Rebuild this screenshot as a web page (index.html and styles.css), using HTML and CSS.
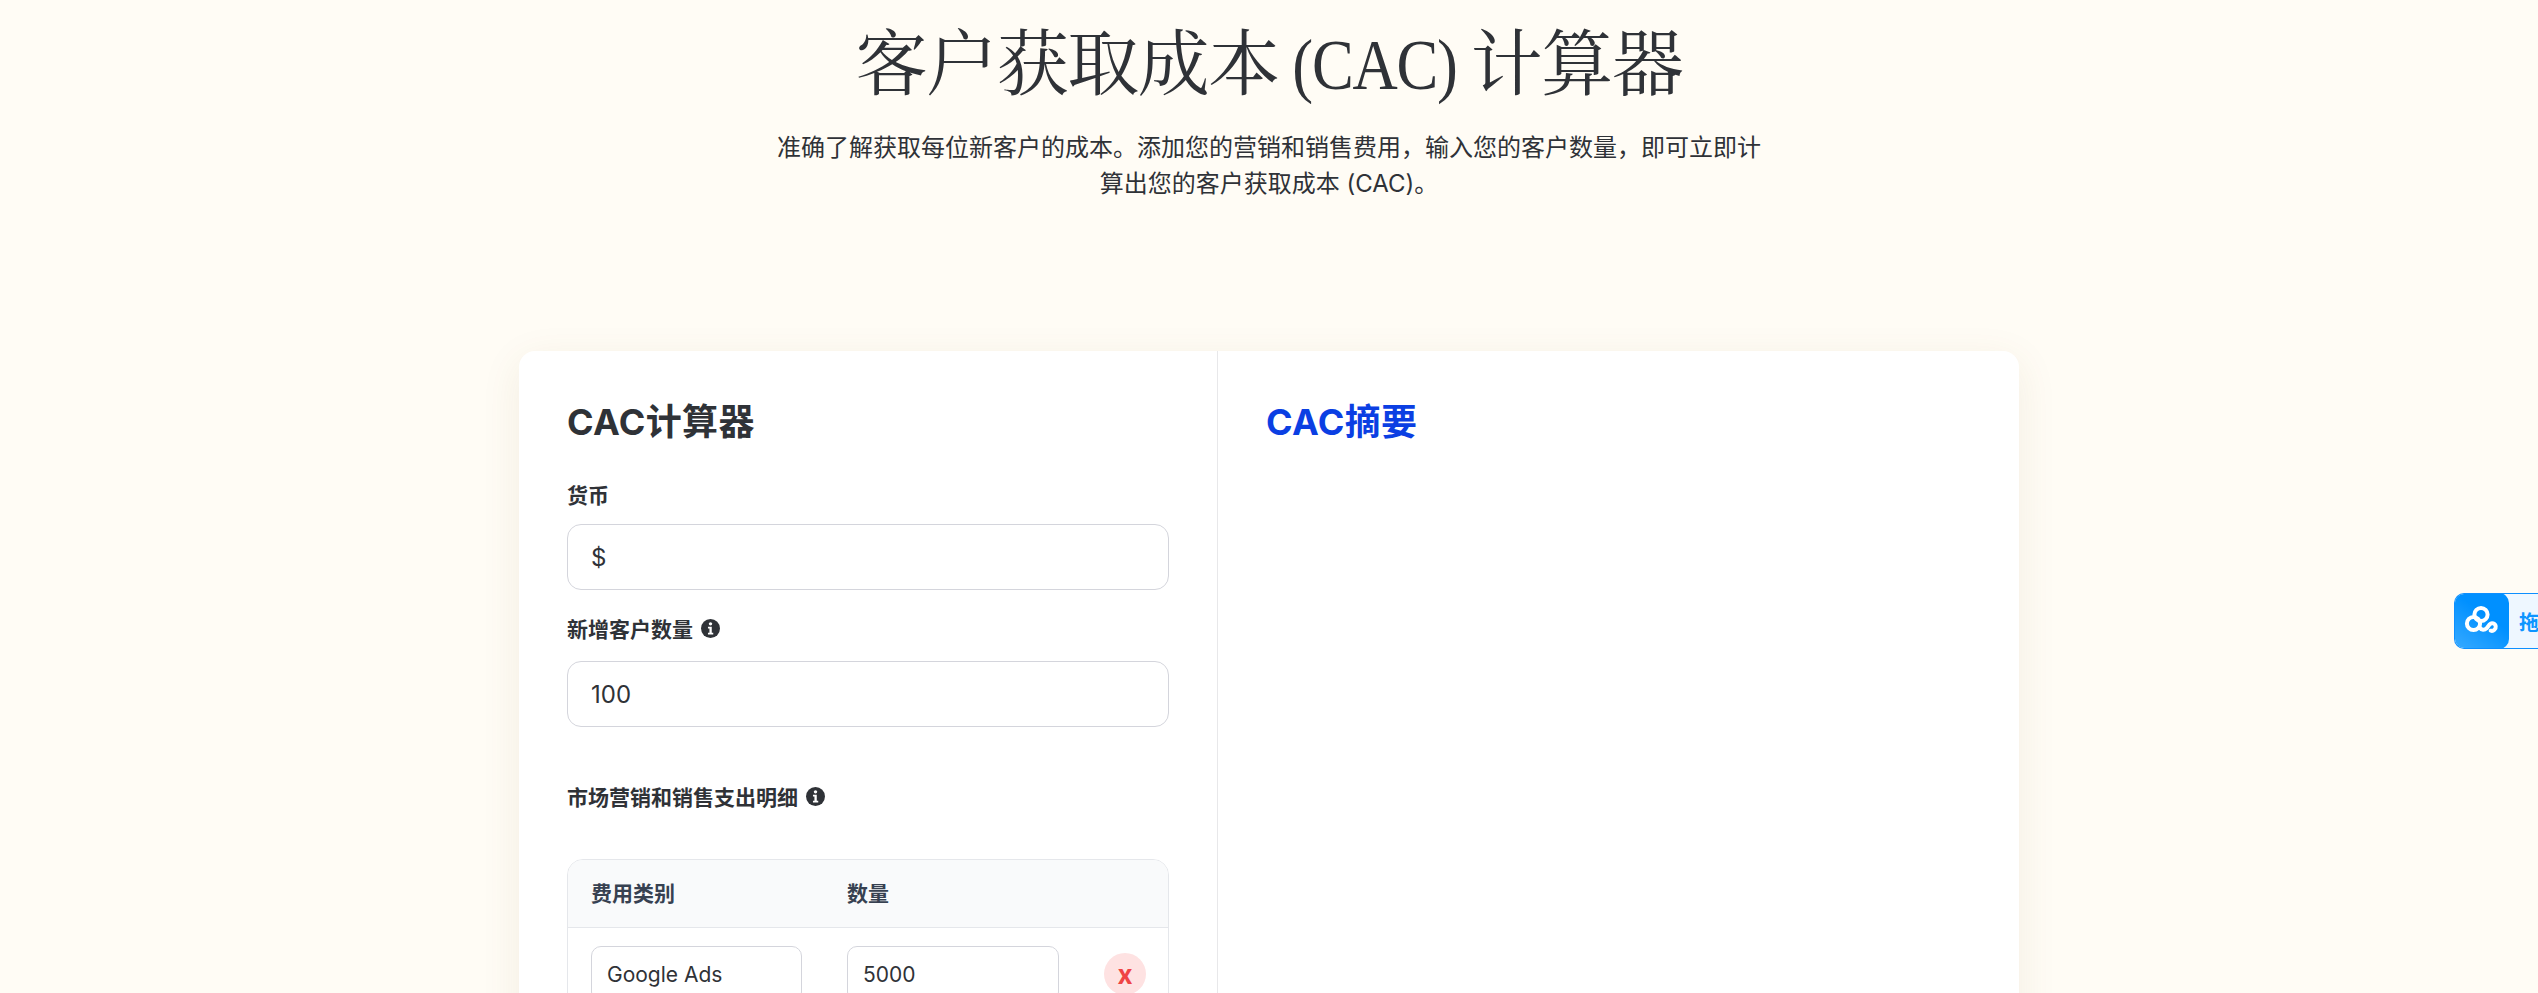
FILE: index.html
```html
<!DOCTYPE html>
<html lang="zh">
<head>
<meta charset="utf-8">
<title>客户获取成本 (CAC) 计算器</title>
<link rel="stylesheet" href="styles.css">
</head>
<body>
<header class="hero">
  <h1 class="hero-title">客户获取成本 <span class="latin">(CAC)</span> 计算器</h1>
  <p class="hero-sub">准确了解获取每位新客户的成本。添加您的营销和销售费用&#65292;输入您的客户数量&#65292;即可立即计算出您的客户获取成本 (CAC)。</p>
</header>
<main class="card">
  <section class="col-form">
    <h2 class="card-title">CAC计算器</h2>
    <label class="field-label first">货币</label>
    <input class="input" type="text" value="$">
    <label class="field-label with-icon">新增客户数量
      <svg class="info" viewBox="0 0 18 18"><circle cx="9" cy="9" r="9" fill="#2f3237"/><circle cx="9" cy="4.6" r="1.6" fill="#fff"/><path d="M6.6 7.4h3.6v5.6h1.4v1.6H6.6V13H8V9H6.6z" fill="#fff"/></svg>
    </label>
    <input class="input" type="text" value="100">
    <label class="field-label section">市场营销和销售支出明细
      <svg class="info" viewBox="0 0 18 18"><circle cx="9" cy="9" r="9" fill="#2f3237"/><circle cx="9" cy="4.6" r="1.6" fill="#fff"/><path d="M6.6 7.4h3.6v5.6h1.4v1.6H6.6V13H8V9H6.6z" fill="#fff"/></svg>
    </label>
    <div class="table">
      <div class="table-head">
        <span>费用类别</span>
        <span>数量</span>
      </div>
      <div class="table-row">
        <input class="cell-input" type="text" value="Google Ads">
        <input class="cell-input" type="text" value="5000">
        <button class="remove" type="button">x</button>
      </div>
    </div>
  </section>
  <section class="col-summary">
    <h2 class="card-title accent">CAC摘要</h2>
  </section>
</main>
<aside class="widget">
  <span class="widget-icon">
    <svg viewBox="0 0 55 56" width="55" height="56"><g fill="none" stroke="#fff" stroke-width="4" stroke-linecap="round"><circle cx="27" cy="21.5" r="6.6"/><circle cx="19.5" cy="30.5" r="6.6"/><path d="M25.5 34.5c2.2 3 5 2.8 7.2.8l3-4c2-2.2 5.6-.8 6 2 .4 2.8-2.2 5.2-5 4.4"/></g></svg>
  </span>
  <span class="widget-text">拖拽</span>
</aside>
</body>
</html>
```

FILE: styles.css
```css
* { box-sizing: border-box; }
html, body { height: 993px; overflow: hidden; }
body {
  margin: 0;
  background: #fffcf5;
  color: #2f3237;
  font-family: Inter, "Noto Sans CJK SC", sans-serif;
}
.hero {
  display: flex;
  flex-direction: column;
  align-items: center;
  padding-top: 22px;
}
.hero-title {
  margin: 0;
  font-family: "Liberation Serif", "Noto Serif CJK SC", "Noto Sans CJK SC", serif;
  font-weight: 400;
  font-size: 72px;
  line-height: 86px;
  letter-spacing: -0.02em;
  color: #2f3237;
}
.latin {
  display: inline-block;
  margin: 0 -15px;
  transform: scaleX(0.87);
}
.hero-sub {
  width: 1000px;
  margin: 22px 0 149px;
  font-size: 24px;
  line-height: 36px;
  text-align: center;
  color: #2f3237;
}
.card {
  display: grid;
  grid-template-columns: 699px 1fr;
  width: 1500px;
  min-height: 900px;
  margin: 0 auto;
  background: #fff;
  border-radius: 16px;
  box-shadow: 0 10px 40px rgba(120, 90, 30, 0.09);
}
.col-form {
  padding: 45px 48px 48px;
  border-right: 1px solid #e8e8ea;
}
.col-summary { padding: 45px 48px 48px; }
.card-title {
  margin: 0;
  font-size: 36px;
  line-height: 52px;
  font-weight: 700;
  letter-spacing: 0.01em;
  color: #2f3237;
}
.card-title.accent { color: #0b3fe3; }
.field-label {
  display: flex;
  align-items: center;
  gap: 8px;
  height: 30px;
  font-size: 21px;
  font-weight: 600;
  color: #2f3237;
}
.field-label.first { margin: 31px 0 15px; }
.field-label.with-icon { margin: 23px 0 18px; }
.field-label.section { margin: 54px 0 48px; }
.info { width: 19px; height: 19px; flex: none; }
.input {
  display: block;
  width: 100%;
  height: 66px;
  padding: 0 23px;
  border: 1px solid #d4d5dc;
  border-radius: 14px;
  background: #fff;
  font: 400 24px Inter, "Noto Sans CJK SC", sans-serif;
  color: #2f3237;
}
.table {
  border: 1px solid #e5e7eb;
  border-radius: 16px;
  overflow: hidden;
}
.table-head {
  display: grid;
  grid-template-columns: 211px 212px;
  column-gap: 45px;
  align-items: center;
  height: 68px;
  padding: 0 23px 3px;
  background: #f9fafb;
  border-bottom: 1px solid #e5e7eb;
  font-size: 21px;
  font-weight: 600;
  color: #374151;
}
.table-row {
  display: grid;
  grid-template-columns: 211px 212px 42px;
  column-gap: 45px;
  align-items: center;
  padding: 18px 23px;
}
.cell-input {
  width: 100%;
  height: 56px;
  padding: 0 15px;
  border: 1px solid #d4d5dc;
  border-radius: 10px;
  background: #fff;
  font: 400 21px Inter, "Noto Sans CJK SC", sans-serif;
  color: #2f3237;
}
.remove {
  width: 42px;
  height: 42px;
  padding: 0;
  border: 0;
  border-radius: 50%;
  background: #fee2e2;
  color: #ef4444;
  font: 700 26px Inter, sans-serif;
}
.widget {
  position: fixed;
  top: 593px;
  right: 0;
  width: 84px;
  height: 56px;
  display: flex;
  align-items: center;
  gap: 10px;
  overflow: hidden;
  background: #eef7ff;
  border: 1px solid #0d8fff;
  border-right: 0;
  border-radius: 10px 0 0 10px;
}
.widget-icon {
  flex: none;
  width: 55px;
  height: 56px;
  margin-left: -1px;
  border-radius: 10px;
  background: linear-gradient(35deg, #38aaff, #0090ff 60%);
}
.widget-icon svg { display: block; }
.widget-text {
  flex: none;
  font-size: 20px;
  font-weight: 700;
  color: #0d95ff;
  white-space: nowrap;
}
```
